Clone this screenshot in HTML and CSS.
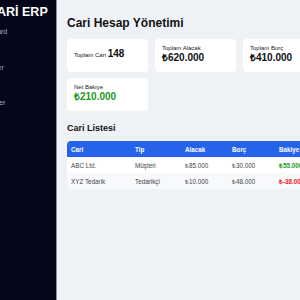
FILE: index.html
```html
<!DOCTYPE html>
<html lang="tr">
<head>
    <meta charset="UTF-8">
    <meta name="viewport" content="width=device-width, initial-scale=1.0">
    <title>Cari ERP</title>
    <link rel="stylesheet" href="styles.css">
</head>
<body>
<div class="sidebar">
    <div class="sidebar_inner">
        <div class="brand">CARİ ERP</div>
        <div class="nav_item">Dashboard</div>
        <div class="nav_item">Müşteriler</div>
        <div class="nav_item">Hareketler</div>
    </div>
</div>
<div class="main">
    <h1 class="page_title">Cari Hesap Yönetimi</h1>
    <div class="cards">
        <div class="card">
            <p class="card_inline">Toplam Cari <strong>148</strong></p>
        </div>
        <div class="card">
            <div class="card_label">Toplam Alacak</div>
            <div class="card_value">₺620.000</div>
        </div>
        <div class="card">
            <div class="card_label">Toplam Borç</div>
            <div class="card_value">₺410.000</div>
        </div>
        <div class="card">
            <div class="card_label">Net Bakiye</div>
            <div class="card_value positive">₺210.000</div>
        </div>
    </div>
    <h2 class="section_title">Cari Listesi</h2>
    <div class="table_wrap">
        <table class="cari_table">
            <thead>
                <tr>
                    <th class="col_cari">Cari</th>
                    <th class="col_tip">Tip</th>
                    <th class="col_num">Alacak</th>
                    <th class="col_num">Borç</th>
                    <th class="col_bakiye">Bakiye</th>
                </tr>
            </thead>
            <tbody>
                <tr>
                    <td>ABC Ltd.</td>
                    <td>Müşteri</td>
                    <td>₺85.000</td>
                    <td>₺30.000</td>
                    <td class="positive bold">₺55.000</td>
                </tr>
                <tr>
                    <td>XYZ Tedarik</td>
                    <td>Tedarikçi</td>
                    <td>₺10.000</td>
                    <td>₺48.000</td>
                    <td class="negative bold">₺-38.000</td>
                </tr>
            </tbody>
        </table>
    </div>
</div>
</body>
</html>
```

FILE: styles.css
```css
* {
    box-sizing: border-box;
}
body, html {
    margin: 0;
    padding: 0;
    width: 300px;
    height: 300px;
    overflow: hidden;
}
body {
    display: flex;
    font-family: "Liberation Sans", Arial, sans-serif;
    background-color: #eef2f7;
    color: #111;
}
.sidebar {
    flex: 0 0 57px;
    height: 300px;
    background-color: #05061a;
    border-right: 1px solid #8a90a6;
    overflow: hidden;
}
.sidebar_inner {
    width: 140px;
    margin-left: -40px;
}
.brand {
    color: #ffffff;
    font-weight: bold;
    font-size: 12.5px;
    padding: 5px 0 0 28px;
    height: 26px;
}
.nav_item {
    color: #a9aec4;
    font-size: 7px;
    padding: 2px 0 0 13px;
    height: 35.5px;
}
.main {
    flex: 0 0 auto;
    width: 300px;
    padding: 16px 0 0 10px;
}
.page_title {
    margin: 0 0 8px 0;
    font-size: 12px;
    font-weight: bold;
    line-height: 15px;
}
.cards {
    display: grid;
    grid-template-columns: repeat(3, 81px);
    gap: 6px 7px;
}
.card {
    background-color: #ffffff;
    border-radius: 4px;
    height: 33px;
    padding: 5px 7px;
}
.card_inline {
    margin: 3px 0 0 0;
    font-size: 6px;
    line-height: 14px;
}
.card_inline strong {
    font-size: 10px;
}
.card_label {
    font-size: 6px;
    line-height: 8px;
    color: #222;
}
.card_value {
    font-size: 10px;
    font-weight: bold;
    line-height: 12px;
}
.positive {
    color: #179c22;
}
.negative {
    color: #f21c1c;
}
.bold {
    font-weight: bold;
}
.section_title {
    margin: 11px 0 7px 0;
    font-size: 9px;
    font-weight: bold;
    line-height: 12px;
}
.table_wrap {
    width: 260px;
    background-color: #ffffff;
    border-radius: 4px 0 0 4px;
    overflow: hidden;
}
.cari_table {
    border-collapse: collapse;
    font-size: 6.3px;
    table-layout: fixed;
    width: 260px;
}
.cari_table th {
    background-color: #2563eb;
    color: #ffffff;
    font-weight: bold;
    text-align: left;
    height: 16px;
    padding: 0 4px;
}
.cari_table td {
    height: 16px;
    padding: 0 4px;
    color: #444;
}
.cari_table tbody tr:nth-child(2) td {
    background-color: #f7f9fc;
}
.cari_table td.positive {
    color: #179c22;
}
.cari_table td.negative {
    color: #f21c1c;
}
.col_cari {
    width: 64px;
}
.col_tip {
    width: 50px;
}
.col_num {
    width: 47px;
}
.col_bakiye {
    width: 99px;
}
```
